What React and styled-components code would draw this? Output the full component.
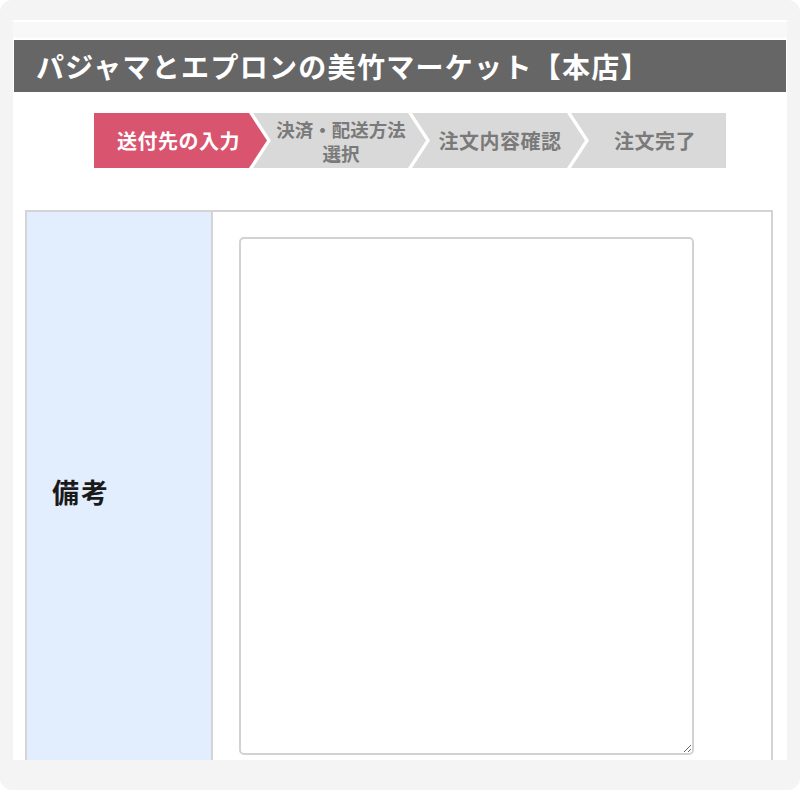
import React from 'react'
import styled, { createGlobalStyle } from 'styled-components'

const GlobalStyle = createGlobalStyle`
  html, body {
    margin: 0;
    padding: 0;
    background: #ffffff;
  }
  body {
    font-family: "Noto Sans CJK JP", "Noto Sans", sans-serif;
  }
`

const Frame = styled.div`
  width: 800px;
  height: 790px;
  box-sizing: border-box;
  background: #f4f4f4;
  border-radius: 12px;
  padding: 20px 13px 30px;
`

const Card = styled.div`
  height: 740px;
  background: #ffffff;
  overflow: hidden;
  display: flex;
  flex-direction: column;
`

const TopBand = styled.div`
  flex-shrink: 0;
  height: 16px;
  border-top: 2px solid #ffffff;
  border-bottom: 2px solid #ffffff;
  background: #f8f8f8;
`

const Header = styled.div`
  flex-shrink: 0;
  height: 52px;
  margin: 0 1px;
  background: #666666;
  display: flex;
  align-items: center;
  padding-left: 22px;
`

const Title = styled.h1`
  margin: 0;
  color: #ffffff;
  font-size: 28px;
  font-weight: 700;
  letter-spacing: 1.3px;
  line-height: 1;
`

const Steps = styled.ol`
  flex-shrink: 0;
  list-style: none;
  margin: 21px 0 0 81px;
  padding: 0;
  display: flex;
  height: 55px;
`

const TIP = 18

const Step = styled.li`
  box-sizing: border-box;
  width: ${({ $last }) => ($last ? 173 - TIP : 173)}px;
  height: 55px;
  margin-left: ${({ $first }) => ($first ? 0 : -14)}px;
  padding: 0 ${({ $last }) => ($last ? 8 : TIP)}px 0 ${({ $first }) => ($first ? 14 : TIP + 3)}px;
  background: ${({ $active }) => ($active ? '#d9546f' : '#d9d9d9')};
  color: ${({ $active }) => ($active ? '#ffffff' : '#7a7a7a')};
  font-size: ${({ $small }) => ($small ? 18.5 : 20)}px;
  font-weight: ${({ $active }) => ($active ? 700 : 600)};
  letter-spacing: ${({ $small }) => ($small ? 0 : 0.5)}px;
  line-height: 24px;
  text-align: center;
  display: flex;
  align-items: center;
  justify-content: center;
  clip-path: ${({ $first, $last }) => {
    const left = $first ? '0 100%, 0 0' : `0 100%, ${TIP}px 50%, 0 0`
    const right = $last
      ? '100% 0, 100% 100%'
      : `calc(100% - ${TIP}px) 0, 100% 50%, calc(100% - ${TIP}px) 100%`
    return `polygon(${left}, ${right})`
  }};
`

const Table = styled.div`
  flex-shrink: 0;
  margin: 42px 14px 0 12px;
  border: 2px solid #d4d4d4;
  display: flex;
`

const Label = styled.div`
  width: 186px;
  flex-shrink: 0;
  background: #e2eefd;
  border-right: 2px solid #d4d4d4;
  display: flex;
  align-items: center;
  padding-left: 25px;
  box-sizing: border-box;
  font-size: 27px;
  font-weight: 700;
  letter-spacing: 2px;
  color: #1a1a1a;
`

const Field = styled.div`
  flex: 1;
  padding: 25px 26px 15px;
`

const Memo = styled.textarea`
  display: block;
  width: 455px;
  height: 518px;
  box-sizing: border-box;
  border: 2px solid #d2d2d2;
  border-radius: 5px;
  background: #ffffff;
  resize: both;
  outline: none;
  font-family: inherit;
  font-size: 16px;
`

const steps = [
  { label: '送付先の入力', active: true },
  { label: <>決済・配送方法<br />選択</>, small: true },
  { label: '注文内容確認' },
  { label: '注文完了' },
]

export default function App() {
  return (
    <>
      <GlobalStyle />
      <Frame>
        <Card>
          <TopBand />
          <Header>
            <Title>パジャマとエプロンの美竹マーケット【本店】</Title>
          </Header>
          <Steps>
            {steps.map((s, i) => (
              <Step
                key={i}
                $first={i === 0}
                $last={i === steps.length - 1}
                $active={s.active}
                $small={s.small}
              >
                {s.label}
              </Step>
            ))}
          </Steps>
          <Table>
            <Label>備考</Label>
            <Field>
              <Memo />
            </Field>
          </Table>
        </Card>
      </Frame>
    </>
  )
}
